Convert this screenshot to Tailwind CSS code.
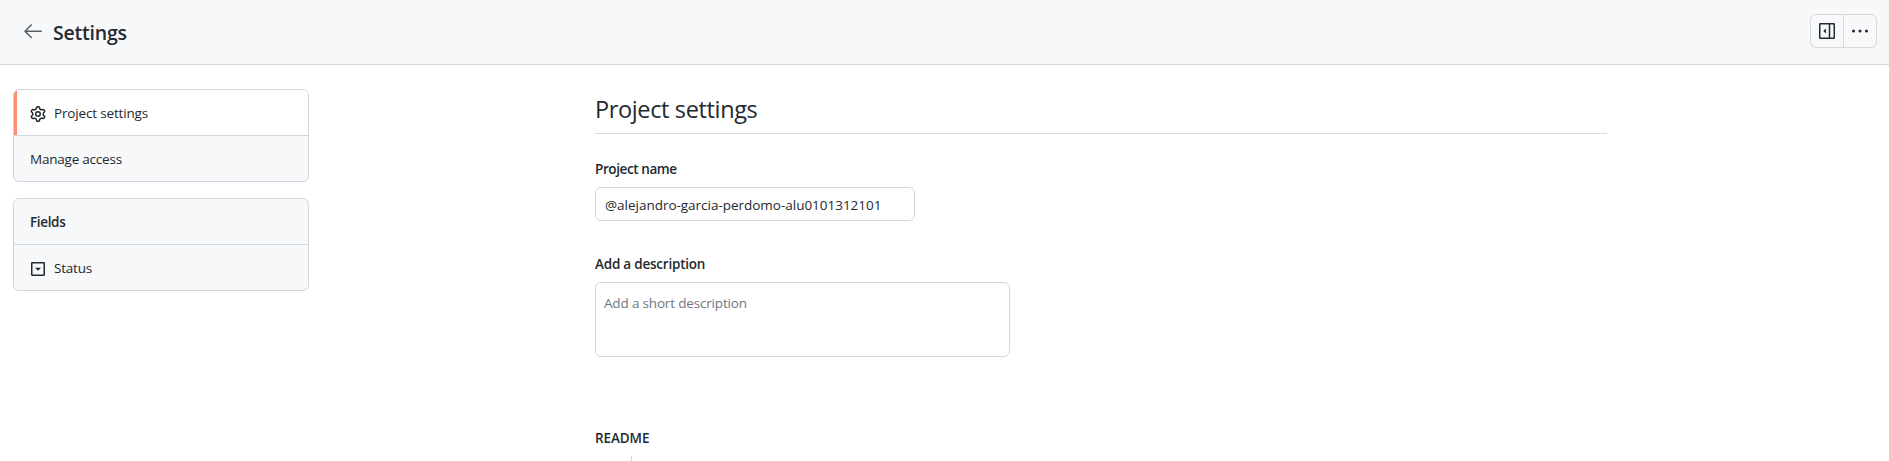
<!DOCTYPE html>
<html lang="en">
<head>
<meta charset="utf-8">
<title>Settings</title>
<script src="https://cdn.jsdelivr.net/npm/@tailwindcss/browser@4"></script>
</head>
<body class="h-[461px] overflow-hidden bg-white font-['Open_Sans','Noto_Sans',sans-serif] text-[13.5px] leading-5 text-[#24292f]">
<header class="flex h-[65px] items-start justify-between border-b border-[#d0d7de] bg-[#f6f8fa] pl-[21px] pr-3">
  <div class="flex items-start">
    <svg class="mt-[19px] size-6 shrink-0 text-[#57606a]" viewBox="0 0 24 24" fill="currentColor"><path d="M10.78 19.03a.75.75 0 0 1-1.06 0l-6.25-6.25a.75.75 0 0 1 0-1.06l6.25-6.25a.75.75 0 1 1 1.06 1.06L5.81 11.5h14.44a.75.75 0 0 1 0 1.5H5.81l4.97 4.97a.75.75 0 0 1 0 1.06Z"/></svg>
    <h1 class="ml-2 mt-[18px] text-[19.5px] leading-[30px] font-semibold tracking-[-0.2px]">Settings</h1>
  </div>
  <div class="mt-3.5 flex h-[34px] w-[67px] rounded-md border border-[#d5d8da]">
    <button class="flex w-[33px] items-center justify-center border-r border-[#d5d8da]">
      <svg class="size-4" viewBox="0 0 16 16" fill="none" stroke="currentColor" stroke-width="1.5"><rect x=".75" y=".75" width="14.5" height="14.5" rx=".6"/><path d="M10.5 1v14"/><path d="M7 5.4v5.2L4.3 8Z" fill="currentColor" stroke="none"/></svg>
    </button>
    <button class="flex flex-1 items-center justify-center">
      <svg class="size-4" viewBox="0 0 16 16" fill="currentColor"><circle cx="1.5" cy="8" r="1.5"/><circle cx="8" cy="8" r="1.5"/><circle cx="14.5" cy="8" r="1.5"/></svg>
    </button>
  </div>
</header>
<div class="flex pl-[13px] pt-6">
  <aside class="flex w-[296px] shrink-0 flex-col gap-4">
    <nav class="h-[93px] overflow-hidden rounded-md border border-[#d0d7de] bg-[#f6f8fa]">
      <a class="flex h-[46px] items-center border-b border-[#d0d7de] bg-white"><span class="h-full w-[3px] bg-[#fd8c73]"></span>
        <svg class="ml-[13px] mt-[3px] size-4" viewBox="0 0 16 16" fill="currentColor"><path d="M8 0a8.2 8.2 0 0 1 .701.031C9.444.095 9.99.645 10.16 1.29l.288 1.107c.018.066.079.158.212.224.231.114.454.243.668.386.123.082.233.09.299.071l1.103-.303c.644-.176 1.392.021 1.82.63.27.385.506.792.704 1.218.315.675.111 1.422-.364 1.891l-.814.806c-.049.048-.098.147-.088.294.016.257.016.515 0 .772-.01.147.038.246.088.294l.814.806c.475.469.679 1.216.364 1.891a7.977 7.977 0 0 1-.704 1.217c-.428.61-1.176.807-1.82.63l-1.102-.302c-.067-.019-.177-.011-.3.071a5.909 5.909 0 0 1-.668.386c-.133.066-.194.158-.211.224l-.29 1.106c-.168.646-.715 1.196-1.458 1.26a8.006 8.006 0 0 1-1.402 0c-.743-.064-1.289-.614-1.458-1.26l-.289-1.106c-.018-.066-.079-.158-.212-.224a5.738 5.738 0 0 1-.668-.386c-.123-.082-.233-.09-.299-.071l-1.103.303c-.644.176-1.392-.021-1.82-.63a8.12 8.12 0 0 1-.704-1.218c-.315-.675-.111-1.422.363-1.891l.815-.806c.05-.048.098-.147.088-.294a6.214 6.214 0 0 1 0-.772c.01-.147-.038-.246-.088-.294l-.815-.806C.635 6.045.431 5.298.746 4.623a7.92 7.92 0 0 1 .704-1.217c.428-.61 1.176-.807 1.82-.63l1.102.302c.067.019.177.011.3-.071.214-.143.437-.272.668-.386.133-.066.194-.158.211-.224l.29-1.106C6.009.645 6.556.095 7.299.03 7.53.01 7.764 0 8 0Zm-.571 1.525c-.036.003-.108.036-.137.146l-.289 1.105c-.147.561-.549.967-.998 1.189-.173.086-.34.183-.5.29-.417.278-.97.423-1.529.27l-1.103-.303c-.109-.03-.175.016-.195.045-.22.312-.412.644-.573.99-.014.031-.021.11.059.19l.815.806c.411.406.562.957.53 1.456a4.709 4.709 0 0 0 0 .582c.032.499-.119 1.05-.53 1.456l-.815.806c-.081.08-.073.159-.059.19.162.346.353.677.573.989.02.03.085.076.195.046l1.102-.303c.56-.153 1.113-.008 1.53.27.161.107.328.204.501.29.447.222.85.629.997 1.189l.289 1.105c.029.109.101.143.137.146a6.6 6.6 0 0 0 1.142 0c.036-.003.108-.036.137-.146l.289-1.105c.147-.561.549-.967.998-1.189.173-.086.34-.183.5-.29.417-.278.97-.423 1.529-.27l1.103.303c.109.029.175-.016.195-.045.22-.313.411-.644.573-.99.014-.031.021-.11-.059-.19l-.815-.806c-.411-.406-.562-.957-.53-1.456a4.709 4.709 0 0 0 0-.582c-.032-.499.119-1.05.53-1.456l.815-.806c.081-.08.073-.159.059-.19a6.464 6.464 0 0 0-.573-.989c-.02-.03-.085-.076-.195-.046l-1.102.303c-.56.153-1.113.008-1.53-.27a4.44 4.44 0 0 0-.501-.29c-.447-.222-.85-.629-.997-1.189l-.289-1.105c-.029-.11-.101-.143-.137-.146a6.6 6.6 0 0 0-1.142 0ZM11 8a3 3 0 1 1-6 0 3 3 0 0 1 6 0ZM9.5 8a1.5 1.5 0 1 0-3.001.001A1.5 1.5 0 0 0 9.5 8Z"/></svg>
        <span class="ml-2 mt-px tracking-[-0.16px]">Project settings</span></a>
      <a class="flex h-[45px] items-center pl-4 pt-px tracking-[-0.22px]">Manage access</a>
    </nav>
    <nav class="h-[93px] overflow-hidden rounded-md border border-[#d0d7de] bg-[#f6f8fa]">
      <h2 class="flex h-[46px] items-center border-b border-[#d0d7de] pl-4 pt-px font-semibold tracking-[-0.35px]">Fields</h2>
      <a class="flex h-[45px] items-center pl-4">
        <svg class="mt-[3px] size-4" viewBox="0 0 16 16" fill="none" stroke="currentColor" stroke-width="1.5"><rect x="1.75" y="1.75" width="12.5" height="12.5" rx=".4"/><path d="M5 6.8h6L8 9.8Z" fill="currentColor" stroke="none"/></svg>
        <span class="ml-2 tracking-[-0.2px]">Status</span></a>
    </nav>
  </aside>
  <main class="ml-[286px] w-[1012px]">
    <h2 class="h-[45px] border-b border-[#d8dee4] pt-0.5 text-[23.5px] leading-9 tracking-[-0.36px]">Project settings</h2>
    <label class="mt-[25px] block font-semibold tracking-[-0.4px]">Project name</label>
    <input class="mt-2 block h-[34px] w-80 rounded-md border border-[#d0d7de] pl-[9px] pr-2 pt-0.5 tracking-[-0.02px]" value="@alejandro-garcia-perdomo-alu0101312101">
    <label class="mt-[33px] block font-semibold tracking-[-0.22px]">Add a description</label>
    <textarea class="mt-2 block h-[75px] w-[415px] resize-none rounded-md border border-[#d0d7de] px-2 py-2.5 tracking-[-0.17px] placeholder:text-[#6e7781]" placeholder="Add a short description"></textarea>
    <h3 class="mt-[71px] font-semibold tracking-[-0.1px]">README</h3>
    <div class="ml-9 mt-2 h-5 w-px bg-[#d0d7de]"></div>
  </main>
</div>
</body>
</html>
